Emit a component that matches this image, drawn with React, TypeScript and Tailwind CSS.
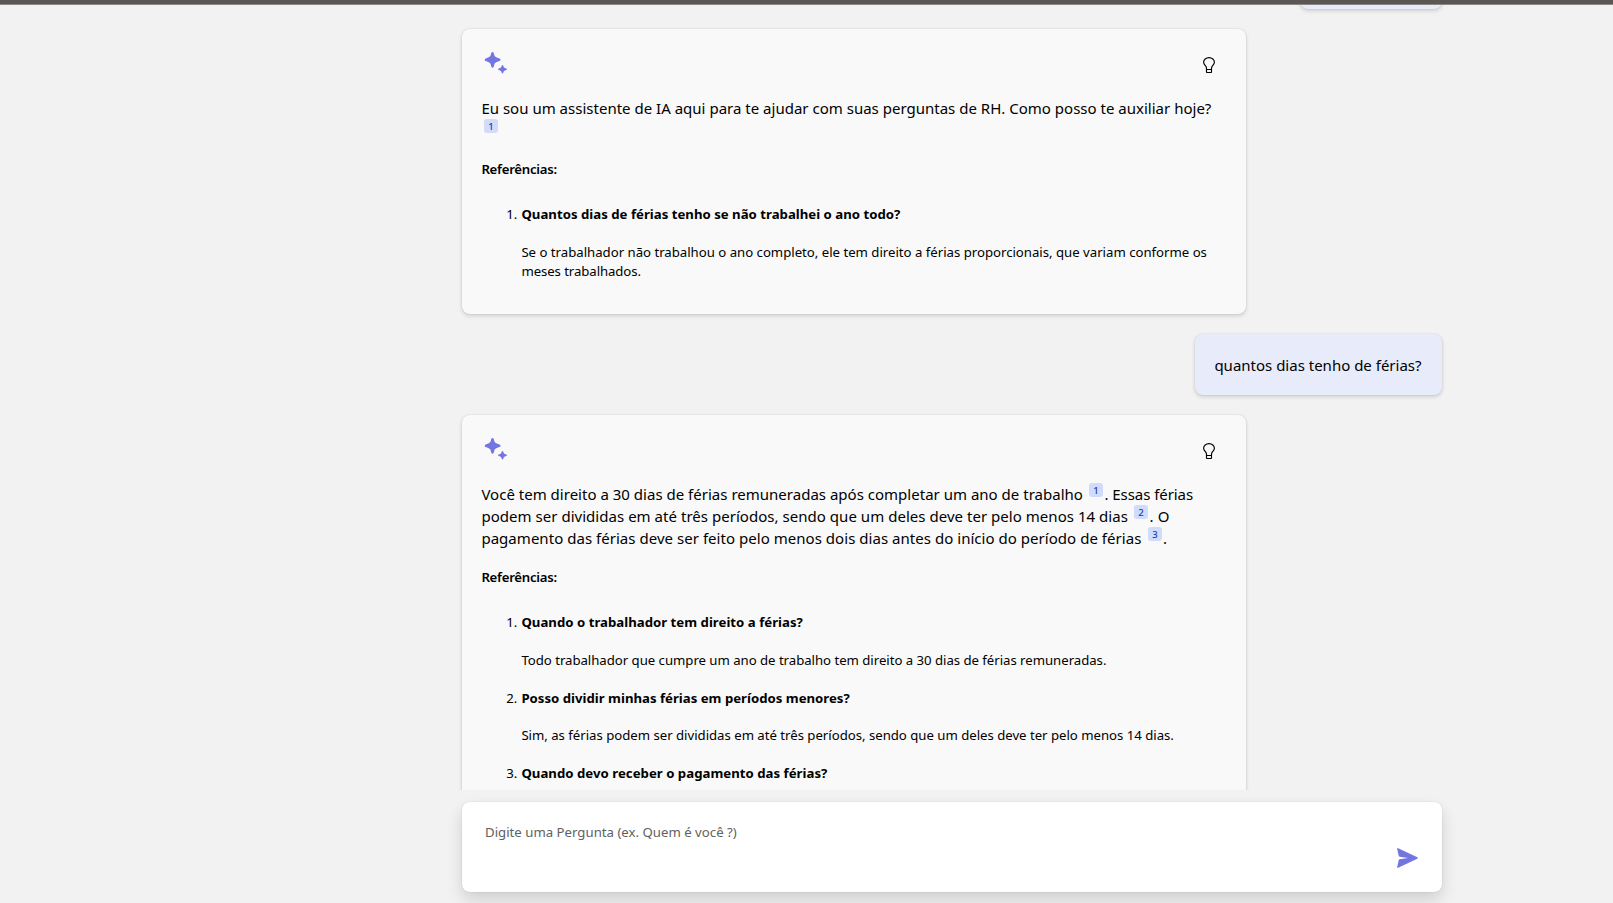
import type { ReactNode } from "react";

function Sparkle() {
  return (
    <svg className="h-6 w-6" viewBox="0 0 24 24" fill="#7376e1">
      <path d="M8.500.9c.65 0 1.050.4 1.200 1L10.300 4c.4 1.300 1.200 2.100 2.500 2.500l2.700.9c1.400.5 1.400 2.200 0 2.700l-2.700.9c-1.300.4-2.100 1.200-2.500 2.500l-.6 2.200c-.4 1.500-2 1.500-2.400 0L6.700 13.500C6.300 12.200 5.500 11.400 4.200 11l-2.400-.9c-1.400-.5-1.400-2.200 0-2.700l2.400-.9C5.500 6.100 6.300 5.300 6.700 4l.6-2.100c.15-.6.550-1 1.200-1z" />
      <path d="M18.500 14c.4 0 .7.25.8.65l.3 1.050c.2.7.6 1.100 1.300 1.300l1.300.4c.95.3.95 1.400 0 1.700l-1.300.4c-.7.2-1.100.6-1.300 1.300l-.3 1.050c-.25.900-1.350.900-1.600 0l-.3-1.050c-.2-.7-.6-1.100-1.300-1.300l-1.300-.4c-.95-.3-.95-1.400 0-1.700l1.300-.4c.7-.2 1.100-.6 1.300-1.300l.3-1.050c.1-.4.4-.65.8-.65z" />
    </svg>
  );
}

function Bulb() {
  return (
    <svg className="h-4 w-3" viewBox="0 0 12 16" fill="none" stroke="#000" strokeWidth="1.15">
      <path d="M3.5 12.5v-1.3c0-.9-.4-1.6-1.1-2.5C1.4 7.5.6 6.600.6 5.300.6 2.700 3 .6 6 .6s5.400 2.100 5.400 4.700c0 1.300-.8 2.200-1.800 3.400-.7.9-1.100 1.600-1.100 2.500v1.300M3.500 12.500h5M3.500 12.500v2.300a.7.7 0 0 0 .7.7h3.600a.7.7 0 0 0 .7-.7v-2.300" />
    </svg>
  );
}

function Cite({ n, className = "" }: { n: number; className?: string }) {
  return (
    <sup
      className={`top-0 flex h-3.5 w-3.5 items-center justify-center rounded-[3px] bg-[#d1dbfa] pt-px text-[9.5px] leading-[13px] font-medium text-[#123bb6] ${className}`}
    >
      {n}
    </sup>
  );
}

function Line({ children, className = "" }: { children: ReactNode; className?: string }) {
  return <div className={`flex h-[22px] items-start whitespace-nowrap ${className}`}>{children}</div>;
}

type Ref = { title: string; titleClass?: string; lines: { text: string; className?: string }[] };

function Answer({ height, refs, children }: { height: string; refs: Ref[]; children: ReactNode }) {
  return (
    <article
      className={`w-[784px] shrink-0 self-start rounded-lg bg-[#f9f9f9] pt-5 pr-5 pl-[19.4px] shadow-[0_2px_4px_rgba(0,0,0,0.14),0_0_2px_rgba(0,0,0,0.12)] ${height}`}
    >
      <header className="flex h-12 items-start justify-between pt-0.5 pr-[11px] pl-[2.6px]">
        <Sparkle />
        <span className="pt-1.5">
          <Bulb />
        </span>
      </header>
      <div className="text-[15px] leading-[22px]">{children}</div>
      <h6 className="mt-[19px] text-[13.2px] leading-[19px] font-semibold tracking-[-0.26px]">Referências:</h6>
      <ol className="mt-[26.15px] text-[13.2px] leading-[18.7px]">
        {refs.map((r, i) => (
          <li key={r.title} className="flex gap-1 whitespace-nowrap">
            <span className="w-9 text-right">{i + 1}.</span>
            <div>
              <h6 className={`mb-[19px] font-bold ${r.titleClass ?? ""}`}>{r.title}</h6>
              <p className="mb-[19px]">
                {r.lines.map((l) => (
                  <span key={l.text} className={`block ${l.className ?? ""}`}>
                    {l.text}
                  </span>
                ))}
              </p>
            </div>
          </li>
        ))}
      </ol>
    </article>
  );
}

function Question({ children, className }: { children?: ReactNode; className: string }) {
  return (
    <div
      className={`h-[61px] shrink-0 self-end rounded-lg bg-[#e8ebfa] py-5 pr-5 pl-[19.4px] text-[15px] leading-[22px] whitespace-nowrap shadow-[0_2px_4px_rgba(0,0,0,0.14),0_0_2px_rgba(0,0,0,0.12)] ${className}`}
    >
      {children}
    </div>
  );
}

export default function App() {
  return (
    <div className="flex h-[903px] flex-col overflow-hidden bg-[#f2f2f2] font-['Noto_Sans',sans-serif] text-black">
      <div className="h-[5px] shrink-0 border-b border-[#8a8683] bg-[#5d5753]" />
      <main className="h-[785px] shrink-0 overflow-hidden">
        <div className="-mt-[57px] ml-[462px] flex w-[980px] flex-col gap-5">
          <Question className="w-[142px]" />
          <Answer
            height="h-[285px]"
            refs={[
              {
                title: "Quantos dias de férias tenho se não trabalhei o ano todo?",
                titleClass: "tracking-[0.009px]",
                lines: [
                  {
                    text: "Se o trabalhador não trabalhou o ano completo, ele tem direito a férias proporcionais, que variam conforme os",
                    className: "tracking-[-0.01px]",
                  },
                  { text: "meses trabalhados.", className: "tracking-[-0.08px]" },
                ],
              },
            ]}
          >
            <Line className="tracking-[0.009px]">
              Eu sou um assistente de IA aqui para te ajudar com suas perguntas de RH. Como posso te auxiliar hoje?
            </Line>
            <Line>
              <Cite n={1} className="ml-[2.6px]" />
            </Line>
          </Answer>
          <Question className="w-[247px]">quantos dias tenho de férias?</Question>
          <Answer
            height="h-[500px]"
            refs={[
              {
                title: "Quando o trabalhador tem direito a férias?",
                titleClass: "tracking-[0.014px]",
                lines: [
                  {
                    text: "Todo trabalhador que cumpre um ano de trabalho tem direito a 30 dias de férias remuneradas.",
                    className: "tracking-[-0.029px]",
                  },
                ],
              },
              {
                title: "Posso dividir minhas férias em períodos menores?",
                lines: [
                  {
                    text: "Sim, as férias podem ser divididas em até três períodos, sendo que um deles deve ter pelo menos 14 dias.",
                    className: "tracking-[-0.018px]",
                  },
                ],
              },
              {
                title: "Quando devo receber o pagamento das férias?",
                titleClass: "tracking-[0.021px]",
                lines: [],
              },
            ]}
          >
            <Line>
              <span className="tracking-[0.011px]">
                Você tem direito a 30 dias de férias remuneradas após completar um ano de trabalho
              </span>
              <Cite n={1} className="mr-[1.6px] ml-1.5" />
              <span className="tracking-[-0.06px]">. Essas férias</span>
            </Line>
            <Line>
              <span className="tracking-[0.034px]">
                podem ser divididas em até três períodos, sendo que um deles deve ter pelo menos 14 dias
              </span>
              <Cite n={2} className="mr-[1.6px] ml-1.5" />
              <span className="tracking-[0.2px]">. O</span>
            </Line>
            <Line>
              <span className="tracking-[0.036px]">
                pagamento das férias deve ser feito pelo menos dois dias antes do início do período de férias
              </span>
              <Cite n={3} className="mr-[1.2px] ml-[6.5px]" />
              <span>.</span>
            </Line>
          </Answer>
        </div>
      </main>
      <form className="mt-3 ml-[462px] flex h-[90px] w-[980px] shrink-0 justify-between rounded-lg bg-white pr-[24.5px] pl-[23px] shadow-[0_8px_16px_rgba(0,0,0,0.14),0_0_2px_rgba(0,0,0,0.12)]">
        <span className="pt-[21px] text-[13.2px] leading-[19px] tracking-[0.01px] text-[#616161]">
          Digite uma Pergunta (ex. Quem é você ?)
        </span>
        <svg className="mt-[46px] h-5 w-[21px]" viewBox="0 0 21 20" fill="#7376e1">
          <path d="M.2 1C0 .3.600-.1 1.200.2L20.300 9.300c.6.300.6 1.100 0 1.400L1.200 19.800c-.6.300-1.200-.1-1-.8L1.700 12.200c.1-.5.400-.8.900-.9L11 10 2.600 8.700c-.5-.1-.8-.4-.9-.9z" />
        </svg>
      </form>
    </div>
  );
}
